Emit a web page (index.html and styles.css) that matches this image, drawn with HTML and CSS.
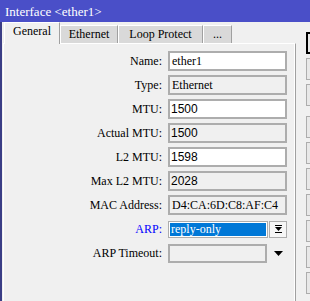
FILE: index.html
```html
<!DOCTYPE html>
<html lang="en">
<head>
  <meta charset="UTF-8">
  <title>Interface &lt;ether1&gt;</title>
  <link rel="stylesheet" href="styles.css">
</head>
<body>
  <div class="window">
    <div class="titlebar">Interface &lt;ether1&gt;</div>
    <div class="content">
      <div class="dialog">
        <div class="tabs">
          <div class="tab active tab-general">General</div>
          <div class="tab tab-ethernet">Ethernet</div>
          <div class="tab tab-loop">Loop Protect</div>
          <div class="tab tab-more">...</div>
        </div>
        <div class="panel">
          <div class="form">
            <label>Name:</label>
            <div class="field">ether1</div>

            <label>Type:</label>
            <div class="field readonly">Ethernet</div>

            <label>MTU:</label>
            <div class="field num">1500</div>

            <label>Actual MTU:</label>
            <div class="field readonly num">1500</div>

            <label>L2 MTU:</label>
            <div class="field num">1598</div>

            <label>Max L2 MTU:</label>
            <div class="field readonly num">2028</div>

            <label>MAC Address:</label>
            <div class="field readonly">D4:CA:6D:C8:AF:C4</div>

            <label class="link">ARP:</label>
            <div class="combo">
              <div class="combo-input"><span class="selected">reply-only</span></div>
              <div class="combo-btn">
                <svg width="9" height="8" viewBox="0 0 9 8">
                  <rect x="1" y="0" width="7" height="1" fill="#000"/>
                  <polygon points="1,2 8,2 4.5,6" fill="#000"/>
                  <rect x="1" y="7" width="7" height="1" fill="#000"/>
                </svg>
              </div>
            </div>

            <label>ARP Timeout:</label>
            <div class="combo">
              <div class="combo-input empty"></div>
              <div class="combo-arrow">
                <svg width="9" height="5" viewBox="0 0 9 5">
                  <polygon points="0,0 9,0 4.5,5" fill="#000"/>
                </svg>
              </div>
            </div>
          </div>
        </div>
      </div>
      <div class="actions">
        <div class="btn default"></div>
        <div class="btn"></div>
        <div class="btn"></div>
        <div class="btn group"></div>
        <div class="btn"></div>
        <div class="btn"></div>
        <div class="btn"></div>
        <div class="btn"></div>
        <div class="btn"></div>
        <div class="btn"></div>
      </div>
    </div>
  </div>
</body>
</html>
```

FILE: styles.css
```css
body {
  margin: 0;
  width: 310px;
  height: 301px;
  overflow: hidden;
  background: #f0f0f0;
  font-family: 'Liberation Serif', 'Times New Roman', serif;
  font-size: 12px;
  color: #000;
}
.window {
  display: flex;
  flex-direction: column;
  height: 301px;
  overflow: hidden;
}
.titlebar {
  height: 22px;
  line-height: 23px;
  padding-left: 5px;
  background: #4a4fc8;
  color: #fff;
  font-size: 13px;
  white-space: nowrap;
}
.content {
  flex: 1;
  display: flex;
  border-left: 2px solid #3b3e86;
}
.dialog {
  margin-left: 1px;
  width: 293px;
  flex-shrink: 0;
  display: flex;
  flex-direction: column;
}
/* Tabs */
.tabs {
  display: flex;
  align-items: flex-end;
  height: 21px;
  padding-left: 1px;
}
.tab {
  box-sizing: border-box;
  height: 18px;
  line-height: 17px;
  background: #d9d9d9;
  border-left: 1px solid #fff;
  border-top: 1px solid #fff;
  border-right: 1px solid #a0a0a0;
  text-align: center;
  white-space: nowrap;
}
.tab.active {
  height: 22px;
  line-height: 16px;
  margin-bottom: -1px;
  background: #f0f0f0;
  position: relative;
  z-index: 1;
}
.tab-general { width: 56px; }
.tab-ethernet { width: 58px; }
.tab-loop { width: 85px; }
.tab-more { width: 29px; }
/* Panel */
.panel {
  flex: 1;
  border-top: 1px solid #fff;
  border-left: 1px solid #fff;
  border-right: 1px solid #a0a0a0;
  box-shadow: inset -1px 0 0 #fff;
}
.form {
  display: grid;
  grid-template-columns: 158px 119px;
  grid-auto-rows: 24px;
  column-gap: 6px;
  align-items: center;
  padding-top: 5px;
}
.form label {
  text-align: right;
  white-space: nowrap;
}
.form label.link {
  color: #0000ff;
}
.field {
  box-sizing: border-box;
  height: 20px;
  line-height: 16px;
  padding-left: 2px;
  border: 2px solid #adadad;
  background: #fff;
  white-space: nowrap;
  overflow: hidden;
}
.field.readonly {
  background: #f0f0f0;
}
.field.num {
  font-family: 'Liberation Sans', Arial, sans-serif;
  padding-left: 1px;
}
.combo {
  display: flex;
  gap: 1px;
  align-items: center;
}
.combo-input {
  box-sizing: border-box;
  width: 100px;
  height: 17px;
  border: 1px solid #adadad;
  background: #fff;
  padding: 1px;
}
.combo-input.empty {
  height: 19px;
  border-width: 2px;
  background: #f0f0f0;
}
.selected {
  display: block;
  height: 13px;
  line-height: 13px;
  background: #0078d7;
  color: #fff;
  padding-left: 1px;
}
.combo-btn {
  box-sizing: border-box;
  width: 18px;
  height: 17px;
  border: 1px solid #adadad;
  background: #f6f6f6;
  display: flex;
  align-items: center;
  justify-content: center;
}
.combo-arrow {
  width: 18px;
  display: flex;
  justify-content: center;
  padding-left: 1px;
}
/* Side buttons */
.actions {
  margin-left: 10px;
  padding-top: 10px;
  display: flex;
  flex-direction: column;
  gap: 4px;
}
.btn {
  box-sizing: border-box;
  width: 60px;
  height: 22px;
  border: 1px solid #adadad;
  background: #e8e8e8;
}
.btn.default {
  border: 2px solid #000;
}
.btn.group {
  margin-top: 6px;
}
```
